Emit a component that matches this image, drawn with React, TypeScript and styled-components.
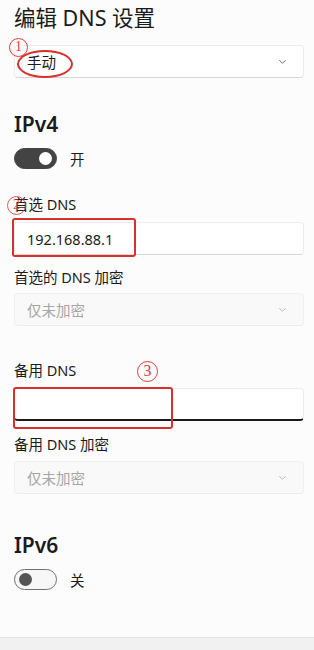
import React, { ReactElement } from "react";
import styled, { createGlobalStyle } from "styled-components";

const GlobalStyle = createGlobalStyle`
  html, body {
    margin: 0;
    padding: 0;
    background: #fcfcfc;
  }
  body {
    font-family: "Noto Sans", "Noto Sans CJK SC", sans-serif;
    color: #1b1b1b;
  }
`;

const Page = styled.div`
  width: 314px;
  height: 650px;
  display: flex;
  flex-direction: column;
  overflow: hidden;
`;

const Body = styled.div`
  flex: 1;
  padding: 4px 10px 0 14px;
  display: flex;
  flex-direction: column;
`;

const Title = styled.h1`
  margin: 0;
  font-size: 21.5px;
  font-weight: 400;
  line-height: 28px;
`;

const Heading = styled.h2<{ top: number }>`
  margin: ${p => p.top}px 0 0;
  font-size: 21px;
  font-weight: 600;
  line-height: 28px;
`;

const Label = styled.div<{ top: number }>`
  margin-top: ${p => p.top}px;
  font-size: 14.5px;
  line-height: 20px;
  position: relative;
`;

const Field = styled.div<{ top: number; disabled?: boolean; focused?: boolean }>`
  position: relative;
  margin-top: ${p => p.top}px;
  height: 33px;
  box-sizing: border-box;
  display: flex;
  align-items: center;
  justify-content: space-between;
  padding: 0 16px 0 12px;
  font-size: 14.5px;
  border-radius: 4px;
  border: 1px solid ${p => (p.disabled ? "#f0f0f0" : "#ececec")};
  border-bottom: ${p =>
    p.focused ? "2px solid #1a1a1a" : p.disabled ? "1px solid #ececec" : "1px solid #d6d6d6"};
  background: ${p => (p.disabled ? "#f9f9f9" : "#ffffff")};
  color: ${p => (p.disabled ? "#a6a6a6" : "#1b1b1b")};
`;

const Chevron = styled.svg<{ faint?: boolean }>`
  width: 9px;
  height: 9px;
  stroke: ${p => (p.faint ? "#b5b5b5" : "#6a6a6a")};
  fill: none;
  stroke-width: 1.1;
`;

const ToggleRow = styled.div<{ top: number }>`
  margin-top: ${p => p.top}px;
  display: flex;
  align-items: center;
  gap: 13px;
  font-size: 14.5px;
  height: 22px;
`;

const Toggle = styled.div<{ on: boolean }>`
  width: 43px;
  height: 21px;
  box-sizing: border-box;
  border-radius: 11px;
  display: flex;
  align-items: center;
  justify-content: ${p => (p.on ? "flex-end" : "flex-start")};
  padding: 0 4px;
  background: ${p => (p.on ? "#434343" : "#f7f7f7")};
  border: 1px solid ${p => (p.on ? "#434343" : "#707070")};
  &::after {
    content: "";
    width: 13px;
    height: 13px;
    border-radius: 50%;
    background: ${p => (p.on ? "#ffffff" : "#555555")};
  }
`;

const Footer = styled.div`
  height: 12px;
  background: #f1f1f1;
  border-top: 1px solid #e4e4e4;
`;

/* red markup drawn over the screenshot */
const Circled = styled.span<{ x: number; y: number; size: number }>`
  position: absolute;
  left: ${p => p.x}px;
  top: ${p => p.y}px;
  width: ${p => p.size}px;
  height: ${p => p.size}px;
  box-sizing: border-box;
  border: 1.3px solid #d9403a;
  border-radius: 50%;
  color: #d9403a;
  font-family: "Liberation Serif", serif;
  font-size: ${p => p.size - 5}px;
  line-height: ${p => p.size - 3}px;
  text-align: center;
`;

const Mark = styled.span<{ x: number; y: number; w: number; h: number; round?: boolean }>`
  position: absolute;
  left: ${p => p.x}px;
  top: ${p => p.y}px;
  width: ${p => p.w}px;
  height: ${p => p.h}px;
  box-sizing: border-box;
  border: 2.5px solid #d8312c;
  border-radius: ${p => (p.round ? "50%" : "3px")};
  pointer-events: none;
`;

const ChevronIcon = ({ faint }: { faint?: boolean }) => (
  <Chevron faint={faint} viewBox="0 0 10 10">
    <path d="M1.5 3.5 L5 7 L8.5 3.5" />
  </Chevron>
);

const App = (): ReactElement => {
  return (
    <Page>
      <GlobalStyle />
      <Body>
        <Title>编辑 DNS 设置</Title>

        <Field top={13}>
          <span>手动</span>
          <ChevronIcon />
          <Circled x={-6} y={-8} size={19}>1</Circled>
          <Mark x={2} y={4} w={56} h={28} round />
        </Field>

        <Heading top={32}>IPv4</Heading>
        <ToggleRow top={9}>
          <Toggle on />
          <span>开</span>
        </ToggleRow>

        <Label top={25}>
          首选 DNS
          <Circled x={-7} y={2} size={19} style={{ opacity: 0.85 }}>2</Circled>
        </Label>
        <Field top={8}>
          <span>192.168.88.1</span>
          <Mark x={-3} y={-5} w={124} h={39} />
        </Field>

        <Label top={12}>首选的 DNS 加密</Label>
        <Field top={6} disabled>
          <span>仅未加密</span>
          <ChevronIcon faint />
        </Field>

        <Label top={34}>
          备用 DNS
          <Circled x={123} y={1} size={21}>3</Circled>
        </Label>
        <Field top={8} focused>
          <span />
          <Mark x={-2} y={-2} w={160} h={42} />
        </Field>

        <Label top={13}>备用 DNS 加密</Label>
        <Field top={7} disabled>
          <span>仅未加密</span>
          <ChevronIcon faint />
        </Field>

        <Heading top={37}>IPv6</Heading>
        <ToggleRow top={9}>
          <Toggle on={false} />
          <span>关</span>
        </ToggleRow>
      </Body>
      <Footer />
    </Page>
  );
};

export default App;
